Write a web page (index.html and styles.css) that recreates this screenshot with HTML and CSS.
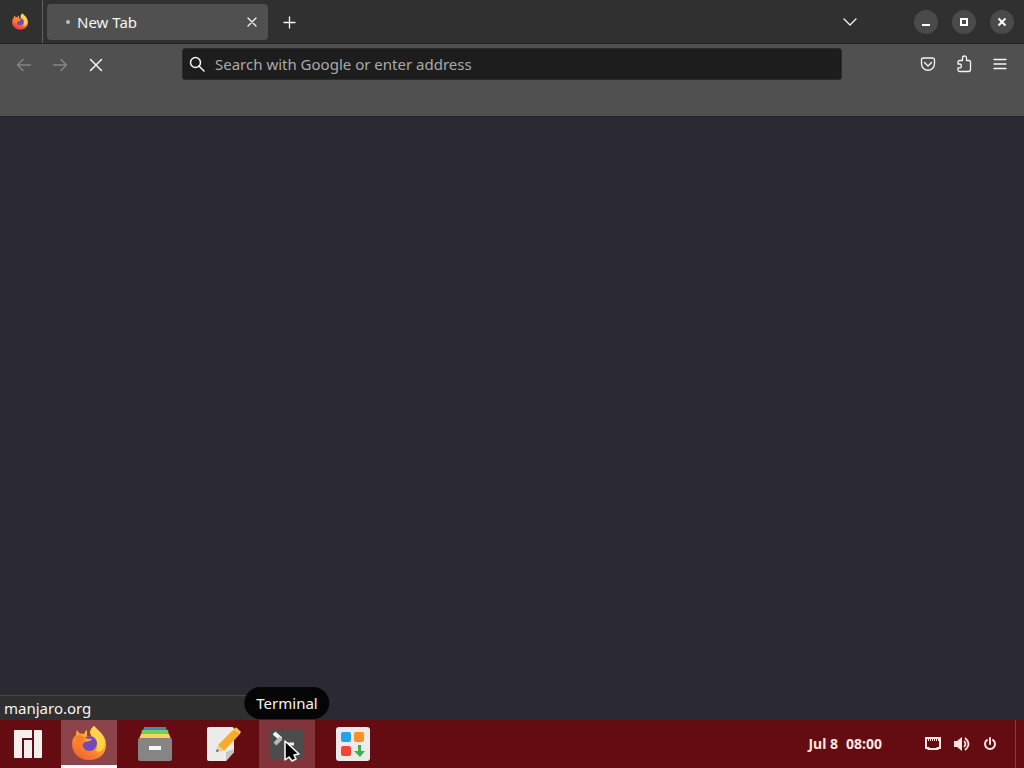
FILE: index.html
```html
<!DOCTYPE html>
<html lang="en">
<head>
<meta charset="utf-8">
<title>New Tab</title>
<link rel="stylesheet" href="styles.css">
</head>
<body>
<svg class="defs" width="0" height="0" aria-hidden="true">
  <defs>
    <linearGradient id="flame" x1="0.85" y1="0" x2="0.25" y2="1">
      <stop offset="0" stop-color="#ffe14a"/><stop offset="0.4" stop-color="#ffad32"/><stop offset="0.75" stop-color="#f97b2c"/><stop offset="1" stop-color="#f0632f"/>
    </linearGradient>
    <linearGradient id="flame-hot" x1="0.8" y1="0" x2="0.25" y2="1">
      <stop offset="0" stop-color="#fff04f"/><stop offset="0.4" stop-color="#ff9640"/><stop offset="0.75" stop-color="#ff5638"/><stop offset="1" stop-color="#e52b62"/>
    </linearGradient>
    <symbol id="fox" viewBox="0 0 34 36">
      <path d="M5 5 L8 9 Q9 8 12 9 Q13 6 15 5 L15 11 L19 11 Q16 5 22 1 Q26 5 29 8 Q34 13 34 20 C34 29 27 35 17 35 C7 35 0 28 0 19 Q0 13 4 10 Q4 7 5 5Z"/>
      <path d="M19 9 Q18 4 22 1 Q26 5 29 8 Q34 14 32 22 Q29 28 24 26 Q27 17 22 12Z" fill="#ffd84a" opacity=".85"/>
      <circle cx="17.500" cy="18.500" r="7.500" fill="#7548bd"/>
      <path d="M3 12 Q8 8 12 12 Q15 14 20 14 Q19 16 14 17 Q10 18 10 23 Q3 21 3 12Z" fill="#f8822b"/>
      <path d="M12 13 Q15 15 20 14 Q19 16 13 16Z" fill="#ffb13a"/>
    </symbol>
  </defs>
</svg>
<div class="desktop">
  <header class="tabbar">
    <div class="firefox-view"><button class="bare" aria-label="Firefox View"><svg width="16" height="17" viewBox="0 0 34 36" fill="url(#flame-hot)"><use href="#fox"/></svg></button></div>
    <div class="tab">
      <span class="loading"></span>
      <span class="tab-title">New Tab</span>
      <button class="bare tab-close" aria-label="Close tab"><svg width="10" height="10" viewBox="0 0 10 10"><path class="line thin" d="M1 1l8 8M9 1L1 9"/></svg></button>
    </div>
    <button class="bare new-tab" aria-label="New tab"><svg width="14" height="14" viewBox="0 0 14 14"><path class="line thin" d="M6.500 2v11M1 7.500h11"/></svg></button>
    <button class="bare list-tabs" aria-label="List all tabs"><svg width="14" height="8" viewBox="0 0 14 8"><path class="line thin" d="M1 1l6 6 6-6"/></svg></button>
    <div class="window-controls">
      <button class="round" aria-label="Minimize"><svg width="10" height="10" viewBox="0 0 10 10"><path d="M1 7h8v2H1z" fill="#fff"/></svg></button>
      <button class="round" aria-label="Restore"><svg width="10" height="10" viewBox="0 0 10 10"><path d="M2 2h6v6H2z" fill="none" stroke="#fff" stroke-width="2"/></svg></button>
      <button class="round" aria-label="Close"><svg width="10" height="10" viewBox="0 0 10 10"><path d="M1.500 1.500l7 7M8.500 1.500l-7 7" stroke="#fff" stroke-width="2"/></svg></button>
    </div>
  </header>
  <nav class="toolbar">
    <div class="nav-buttons">
      <button class="bare" disabled aria-label="Back"><svg width="16" height="14" viewBox="0 0 16 14"><path class="line" d="M14.500 7H1.500M7 1.500L1.500 7l5.500 5.500"/></svg></button>
      <button class="bare" disabled aria-label="Forward"><svg width="16" height="14" viewBox="0 0 16 14"><path class="line" d="M1.500 7h13M9 1.500l5.500 5.500L9 12.500"/></svg></button>
      <button class="bare" aria-label="Stop"><svg width="14" height="14" viewBox="0 0 14 14"><path class="line" d="M1.500 1.500l11 11M12.500 1.500l-11 11"/></svg></button>
    </div>
    <label class="urlbar">
      <svg width="16" height="16" viewBox="0 0 16 16"><circle class="line" cx="6.500" cy="6.500" r="5"/><path class="line" d="M10 10l5 5"/></svg>
      <input type="text" aria-label="Address" placeholder="Search with Google or enter address">
    </label>
    <div class="tools">
      <button class="bare" aria-label="Pocket"><svg width="16" height="16" viewBox="0 0 16 16"><path class="line thin" d="M3 2h10q1.500 0 1.500 2v3.500c0 9-13 9-13 0V4q0-2 1.500-2zM4.500 6.500L8 10l3.500-3.500"/></svg></button>
      <button class="bare" aria-label="Extensions"><svg width="16" height="18" viewBox="0 0 16 18"><path class="line thin" d="M3.500 16.500h9q2 0 2-2V7q0-1.500-1.500-1.500h-2.500V3a2 2 0 0 0-4 0v2.500H4Q2 5.500 2 7v2h1.500a1.900 1.900 0 0 1 0 3.800H2V15q0 1.500 1.500 1.500z"/></svg></button>
      <button class="bare" aria-label="Menu"><svg width="14" height="14" viewBox="0 0 14 14"><path class="line thin" d="M1 2.500h12M1 7h12M1 11.500h12"/></svg></button>
    </div>
  </nav>
  <main class="page"><div class="status">manjaro.org</div></main>
  <footer class="taskbar">
    <button class="app menu" aria-label="Applications"><svg width="28" height="28" viewBox="0 0 28 28" fill="#f5efed"><path d="M1 0h17v8H8v20H1q-1 0-1-1V1q0-1 1-1zM10 10h8v18h-8zM20 0h7q1 0 1 1v26q0 1-1 1h-7z"/></svg></button>
    <button class="app active" aria-label="Firefox"><svg width="34" height="36" viewBox="0 0 34 36" fill="url(#flame)"><use href="#fox"/></svg></button>
    <button class="app" aria-label="Files"><svg width="34" height="34" viewBox="0 0 34 34"><path d="M6 0h22l1 5H5z" fill="#4988b6"/><path d="M4 3h26l1 5H3z" fill="#70cd62"/><path d="M3 7h28l2 5H1z" fill="#f6d45f"/><rect y="11" width="34" height="23" rx="2" fill="#858585"/><rect x="11" y="19" width="12" height="4" fill="#f7f7f7"/></svg></button>
    <button class="app" aria-label="Text Editor"><svg width="40" height="34" viewBox="-6 0 40 34"><path d="M2 0h23q2 0 2 2v23l-8 9H2q-2 0-2-2V2q0-2 2-2z" fill="#ececeb"/><path d="M27 22v3l-8 9v-9z" fill="#c9c4c0"/><path d="M11 18L26 3l6 5-15 16z" fill="#f9ab29"/><path d="M26 3l2-2q1-1 2 0l4 4-2 3z" fill="#ffc64e"/><path d="M9 25l2-7 6 6z" fill="#e6cda1"/><path d="M9 25l1-3 2 2z" fill="#555"/></svg></button>
    <div class="app-wrap">
      <button class="app hover" aria-label="Terminal" aria-describedby="tip"><svg width="34" height="34" viewBox="0 0 34 34"><rect y="2" width="34" height="30" rx="2" fill="#4c4c4c"/><path d="M4 6l7 6" stroke="#f5f5f5" stroke-width="4"/><path d="M11 11l-6 6" stroke="#b9b9b9" stroke-width="4"/><path d="M16 17h8" stroke="#eee" stroke-width="3"/></svg></button>
      <span class="tooltip" id="tip" role="tooltip">Terminal</span>
      <svg class="pointer" width="18" height="24" viewBox="0 0 18 24"><path d="M2 2v19l4-3 3 4 4-2-2-4 5-1z" fill="#000" stroke="#fff" stroke-width="1.500" stroke-linejoin="round"/></svg>
    </div>
    <button class="app" aria-label="Software"><svg width="34" height="34" viewBox="0 0 34 34"><rect width="34" height="34" rx="3" fill="#edebea"/><rect x="5" y="5" width="10" height="10" rx="2" fill="#20a5ed"/><rect x="18" y="5" width="10" height="10" rx="2" fill="#f6921e"/><rect x="5" y="19" width="10" height="10" rx="2" fill="#f24437"/><path d="M22 18h3v6h4l-5 6-6-6h4z" fill="#3eae51"/></svg></button>
    <div class="tray">
      <button class="clock"><span>Jul 8</span><span>08:00</span></button>
      <button class="system" aria-label="System menu">
        <svg width="16" height="14" viewBox="0 0 16 14"><path d="M0 0h16v12h-2l-1 1H3l-1-1H0zM2 4v6h2l1 1h6l1-1h2V4h-1V2h-1v2h-1V2h-1v2H9V2H8v2H7V2H6v2H5V2H4v2H3V2H2z" fill="#ffe4df" fill-rule="evenodd"/></svg>
        <svg width="16" height="16" viewBox="0 0 16 16"><path d="M0 5h3l5-4v14l-5-4H0z" fill="#ffe4df"/><path d="M10 5q3 3 0 6M11 2q7 6 0 12" fill="none" stroke="#ffe4df" stroke-width="1.700"/></svg>
        <svg width="14" height="14" viewBox="0 0 14 14"><path d="M4 3a5 5 0 1 0 6 0M7 1v6" fill="none" stroke="#ffe4df" stroke-width="2" stroke-linecap="round"/></svg>
      </button>
    </div>
    <button class="show-desktop" aria-label="Show desktop"></button>
  </footer>
</div>
</body>
</html>
```

FILE: styles.css
```css
* { box-sizing: border-box; }
body { margin: 0; font-family: "Noto Sans", sans-serif; font-size: 15px; color: #f5f5f5; }
button { border: 0; padding: 0; margin: 0; color: inherit; font: inherit; background: none; }
svg { display: block; flex: none; }
.defs { position: absolute; }
.line { fill: none; stroke: currentColor; stroke-width: 1.5; stroke-linecap: round; stroke-linejoin: round; }
.thin { stroke-width: 1.3; }
.desktop { min-height: 100vh; display: flex; flex-direction: column; background: #2b2a33; }
.bare { display: flex; align-items: center; justify-content: center; }
.bare:disabled { color: #858585; }
.tabbar { height: 44px; display: flex; align-items: center; background: #303030; border-bottom: 1px solid #242424; }
.firefox-view { width: 43px; align-self: stretch; display: flex; align-items: center; padding-left: 12px; border-right: 1px solid #626262; }
.tab { width: 221px; height: 36px; margin-left: 4px; padding: 0 11px 0 19px; display: flex; align-items: center; background: #505050; border-radius: 4px; }
.loading { width: 4px; height: 4px; border-radius: 50%; background: #bdbdbd; }
.tab-title { margin-left: 7px; flex: 1; line-height: 20px; }
.new-tab { width: 28px; height: 28px; margin-left: 8px; }
.list-tabs { width: 28px; height: 28px; margin-left: auto; }
.window-controls { display: flex; gap: 14px; margin: 0 10px 0 50px; }
.round { width: 24px; height: 24px; border-radius: 50%; display: flex; align-items: center; justify-content: center; background: #4a4a4a; }
.toolbar { height: 73px; display: grid; grid-template-columns: 182px 1fr 182px; align-items: start; padding-top: 4px; background: #505050; border-bottom: 1px solid #242329; }
.nav-buttons { display: flex; gap: 8px; padding: 3px 10px; }
.nav-buttons .bare, .tools .bare { width: 28px; height: 28px; }
.urlbar { height: 32px; padding: 0 6px; display: flex; align-items: center; gap: 10px; background: #1d1d1d; border: 1px solid #2b2b2b; border-radius: 3px; }
.urlbar input { flex: 1; min-width: 0; border: 0; outline: 0; padding: 0; background: none; color: #f5f5f5; font: 15px/24px "Noto Sans", sans-serif; }
.urlbar input::placeholder { color: #aaa; opacity: 1; }
.tools { display: flex; justify-content: flex-end; gap: 8px; padding: 2px 10px; }
.page { flex: 1; display: flex; align-items: flex-end; }
.status { width: 25%; height: 25px; padding: 0 4px; line-height: 24px; background: #2f2f2f; border-top: 1px solid #45444b; }
.taskbar { height: 48px; display: flex; gap: 10px; background: #650b12; }
.app { width: 56px; height: 48px; display: flex; align-items: center; justify-content: center; }
.menu { width: 51px; padding-left: 5px; }
.active { background: #8c444a; border-bottom: 3px solid #fff; }
.app-wrap { position: relative; }
.hover { background: #83343b; }
.tooltip { position: absolute; left: 50%; bottom: 49px; transform: translateX(-50%); height: 32px; padding: 0 12px; border-radius: 16px; line-height: 32px; background: #050505; }
.pointer { position: absolute; left: 24px; top: 19px; }
.tray { margin-left: auto; padding-right: 8px; display: flex; align-items: center; gap: 43px; color: #ffe4df; }
.clock { display: flex; gap: 8px; font-weight: 700; font-size: 14px; line-height: 18px; }
.system { display: flex; align-items: center; gap: 13px; }
.show-desktop { width: 9px; border-left: 1px solid #8b3a40; }
```
